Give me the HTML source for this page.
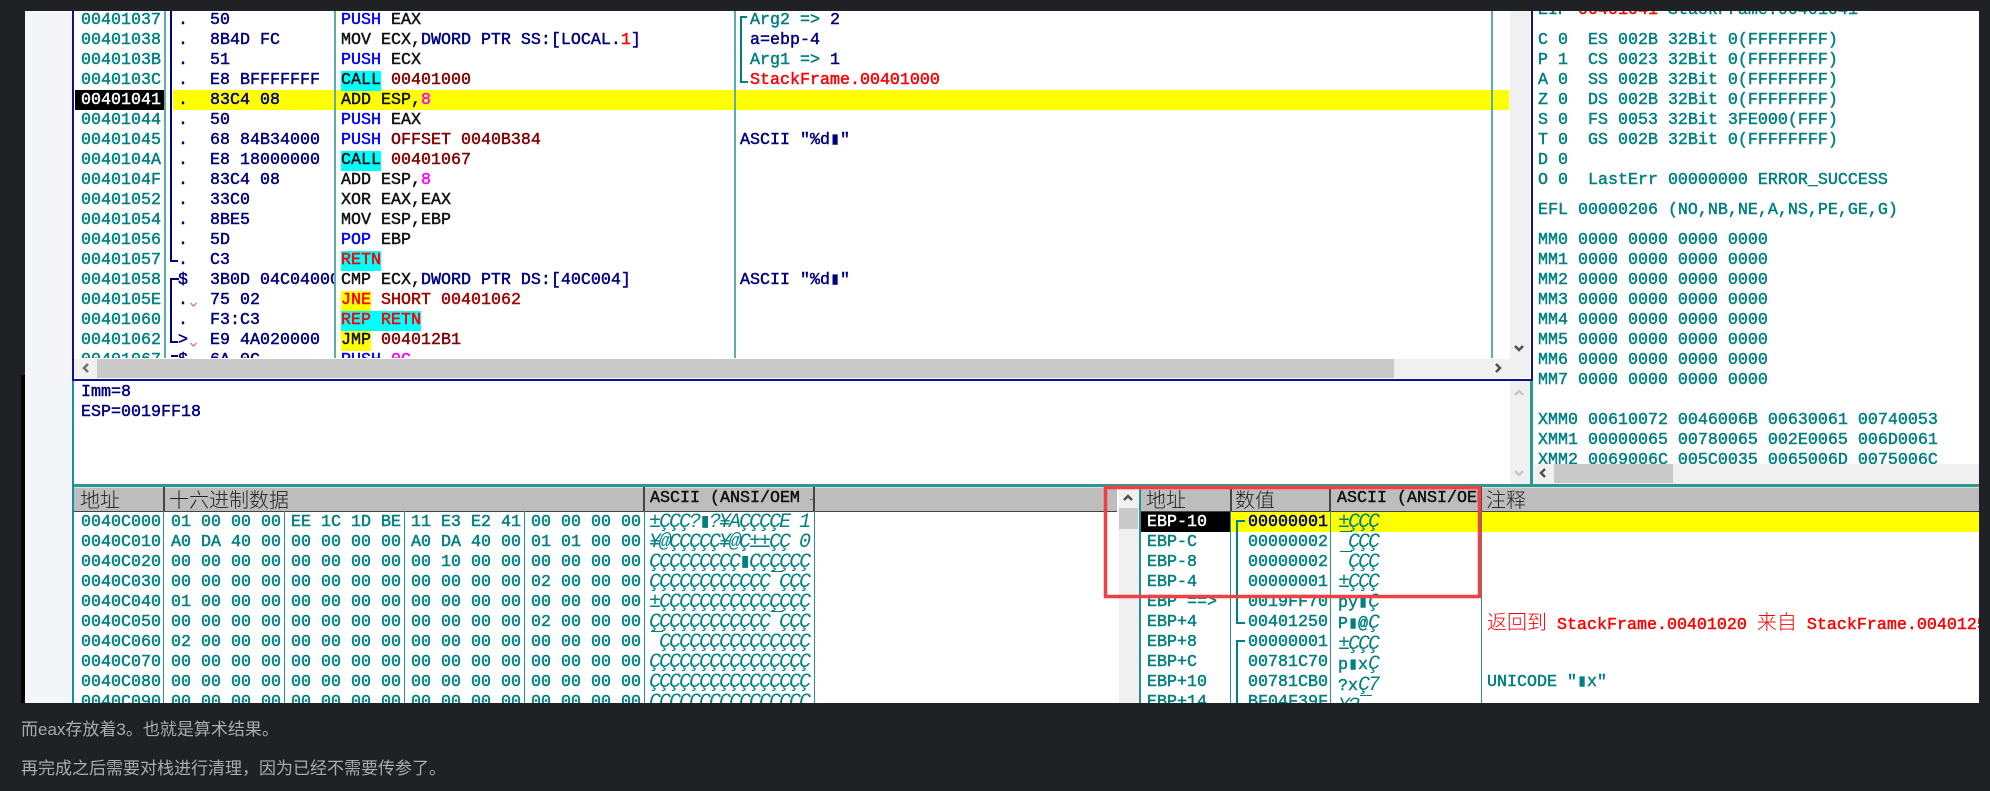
<!DOCTYPE html>
<html lang="zh"><head><meta charset="utf-8"><title>StackFrame</title>
<style>
html,body{margin:0;padding:0;background:#202124;width:1990px;height:791px;overflow:hidden}
#r{position:relative;width:1990px;height:791px;overflow:hidden}
#r div,#r svg{position:absolute}
.t{font:16.667px/20px "Liberation Mono","DejaVu Sans Mono","Noto Sans CJK SC",monospace;white-space:pre;color:#008080;-webkit-text-stroke:.45px currentColor}
.n{color:#000080}.b{color:#0000ff}.k{color:#111}.m{color:#800000}.p{color:#ff00ff}.e{color:#ff0000}.g{color:#008080}
.c{background:#00ffff;display:inline-block;height:20px;vertical-align:top}
.y{background:#ffff00;display:inline-block;height:20px;vertical-align:top}
.a{font-style:italic;font-size:20px;letter-spacing:-2px;-webkit-text-stroke:0}
.a span{font-size:16.667px;letter-spacing:0;font-style:normal;-webkit-text-stroke:.45px currentColor}
.sep{width:2px;background:#5cadad}
.h{top:487px;height:23px;background:#bdbdbd;border-bottom:1px solid #444;border-top:1px solid #ddd;box-sizing:content-box}
.hs{top:487px;width:2px;height:24px;background:#444}
.hc{top:487px;height:24px;font:20px/24px "Noto Sans CJK SC","WenQuanYi Zen Hei",sans-serif;font-weight:300;color:#222;white-space:pre}
.ha{top:489px;font:16.667px/20px "Liberation Mono",monospace;color:#111;white-space:pre;-webkit-text-stroke:.45px #111;overflow:hidden}
.para{left:21px;font:17px/24px "Liberation Sans","Noto Sans CJK SC",sans-serif;color:#a9abb0;white-space:pre}
</style></head><body><div id="r">

<!-- image base -->
<div style="left:25px;top:11px;width:1954px;height:692px;background:#fff"></div>
<div style="left:25px;top:11px;width:47px;height:692px;background:#f4f5f9"></div>
<div style="left:21px;top:375px;width:4px;height:328px;background:#000"></div>

<!-- disasm highlight row -->
<div style="left:75px;top:90px;width:89px;height:20px;background:#000"></div>
<div style="left:173px;top:90px;width:1336px;height:20px;background:#ff0"></div>

<!-- disasm panes -->
<div style="left:74px;top:11px;width:1436px;height:347px;overflow:hidden">
<div class="t" style="left:7px;top:0">00401037
00401038
0040103B
0040103C
<span style="color:#fff">00401041</span>
00401044
00401045
0040104A
0040104F
00401052
00401054
00401056
00401057
00401058
0040105E
00401060
00401062
00401067</div>
<div class="t n" style="left:104px;top:0">.
.
.
.
.
.
.
.
.
.
.
.
.
$
.
.
&gt;
$</div>
<div class="t n" style="left:136px;top:0;width:124px;height:380px;overflow:hidden">50
8B4D FC
51
E8 BFFFFFFF
83C4 08
50
68 84B34000
E8 18000000
83C4 08
33C0
8BE5
5D
C3
3B0D 04C04000
75 02
F3:C3
E9 4A020000
6A 0C</div>
<div class="t k" style="left:267px;top:0"><span class="b">PUSH</span> EAX
MOV ECX,<span class="n">DWORD PTR SS:[LOCAL.</span><span class="e">1</span><span class="n">]</span>
<span class="b">PUSH</span> ECX
<span class="c">CALL</span> <span class="m">00401000</span>
ADD ESP,<span class="p">8</span>
<span class="b">PUSH</span> EAX
<span class="b">PUSH</span> <span class="m">OFFSET 0040B384</span>
<span class="c">CALL</span> <span class="m">00401067</span>
ADD ESP,<span class="p">8</span>
XOR EAX,EAX
MOV ESP,EBP
<span class="b">POP</span> EBP
<span class="c e">RETN</span>
CMP ECX,<span class="n">DWORD PTR DS:[40C004]</span>
<span class="y e">JNE</span> <span class="m" style="color:#a00000">SHORT 00401062</span>
<span class="c e">REP RETN</span>
<span class="y">JMP</span> <span class="m">004012B1</span>
<span class="b">PUSH</span> <span class="p">0C</span></div>
<div class="t n" style="left:666px;top:0"> <span class="g">Arg2 =&gt;</span> 2
 a=ebp-4
 <span class="g">Arg1 =&gt;</span> 1
 <span class="e">StackFrame.00401000</span>


ASCII "%d▮"






ASCII "%d▮"</div>
</div>
<div class="sep" style="left:164px;top:11px;height:347px"></div>
<div class="sep" style="left:334px;top:11px;height:347px"></div>
<div class="sep" style="left:734px;top:11px;height:347px"></div>
<div class="sep" style="left:1491px;top:11px;height:347px"></div>

<svg style="left:0;top:0" width="1990" height="791" fill="none">
<path d="M171 11V261H178M179 279H171V342H178M178 356H171" stroke="#000080" stroke-width="2"/>
<path d="M747 17H741V82H748" stroke="#008080" stroke-width="2"/>
<path d="M190.500 303l3 3 3-3M190.500 343l3 3 3-3" stroke="#f05050" stroke-width="1"/>
</svg>

<!-- top scrollbars -->
<div style="left:1510px;top:11px;width:20px;height:367px;background:#f0f0f0"></div>
<div style="left:74px;top:359px;width:1456px;height:19px;background:#f0f0f0"></div>
<div style="left:97px;top:359px;width:1297px;height:19px;background:#c9c9c9"></div>
<div style="left:72px;top:379px;width:1461px;height:2px;background:#101090"></div>
<div style="left:72px;top:11px;width:2px;height:370px;background:#101090"></div>
<div style="left:1531px;top:11px;width:2px;height:370px;background:#101090"></div>
<div style="left:72px;top:381px;width:2px;height:322px;background:#1a8f9f"></div>
<div style="left:1530px;top:381px;width:3px;height:104px;background:#2a9a90"></div>

<!-- info pane -->
<div class="t n" style="left:81px;top:383px">Imm=8
ESP=0019FF18</div>
<div style="left:1510px;top:381px;width:20px;height:103px;background:#f0f0f0"></div>

<!-- registers -->
<div style="left:1533px;top:11px;width:446px;height:453px;overflow:hidden">
<div class="t" style="left:5px;top:-10px">EIP <span class="e">00401041</span> StackFrame.00401041</div>
<div class="t" style="left:5px;top:20px">C 0  ES 002B 32Bit 0(FFFFFFFF)
P 1  CS 0023 32Bit 0(FFFFFFFF)
A 0  SS 002B 32Bit 0(FFFFFFFF)
Z 0  DS 002B 32Bit 0(FFFFFFFF)
S 0  FS 0053 32Bit 3FE000(FFF)
T 0  GS 002B 32Bit 0(FFFFFFFF)
D 0
O 0  LastErr 00000000 ERROR_SUCCESS</div>
<div class="t" style="left:5px;top:190px">EFL 00000206 (NO,NB,NE,A,NS,PE,GE,G)</div>
<div class="t" style="left:5px;top:220px">MM0 0000 0000 0000 0000
MM1 0000 0000 0000 0000
MM2 0000 0000 0000 0000
MM3 0000 0000 0000 0000
MM4 0000 0000 0000 0000
MM5 0000 0000 0000 0000
MM6 0000 0000 0000 0000
MM7 0000 0000 0000 0000

XMM0 00610072 0046006B 00630061 00740053
XMM1 00000065 00780065 002E0065 006D0061
XMM2 0069006C 005C0035 0065006D 0075006C</div>
</div>
<div style="left:1533px;top:464px;width:446px;height:20px;background:#f0f0f0"></div>
<div style="left:1554px;top:464px;width:119px;height:19px;background:#c9c9c9"></div>

<!-- teal divider + headers -->
<div style="left:74px;top:484px;width:1905px;height:3px;background:#2a9a90"></div>
<div class="h" style="left:74px;width:1043px"></div>
<div class="h" style="left:1141px;width:838px"></div>
<div class="hc" style="left:80px">地址</div>
<div class="hc" style="left:169px">十六进制数据</div>
<div class="ha" style="left:650px;width:160px">ASCII (ANSI/OEM</div>
<div style="left:810px;top:499px;width:3px;height:1px;background:#777"></div>
<div class="hc" style="left:1146px">地址</div>
<div class="hc" style="left:1235px">数值</div>
<div class="ha" style="left:1337px;width:144px">ASCII (ANSI/OEM</div>
<div class="hc" style="left:1486px">注释</div>
<div class="hs" style="left:163px"></div>
<div class="hs" style="left:643px"></div>
<div class="hs" style="left:813px"></div>
<div class="hs" style="left:1230px"></div>
<div class="hs" style="left:1329px"></div>
<div class="hs" style="left:1480px"></div>

<!-- dump -->
<div style="left:74px;top:511px;width:1045px;height:192px;overflow:hidden">
<div class="t" style="left:7px;top:2px">0040C000
0040C010
0040C020
0040C030
0040C040
0040C050
0040C060
0040C070
0040C080
0040C090</div>
<div class="t" style="left:97px;top:2px">01 00 00 00
A0 DA 40 00
00 00 00 00
00 00 00 00
01 00 00 00
00 00 00 00
02 00 00 00
00 00 00 00
00 00 00 00
00 00 00 00</div>
<div class="t" style="left:217px;top:2px">EE 1C 1D BE
00 00 00 00
00 00 00 00
00 00 00 00
00 00 00 00
00 00 00 00
00 00 00 00
00 00 00 00
00 00 00 00
00 00 00 00</div>
<div class="t" style="left:337px;top:2px">11 E3 E2 41
A0 DA 40 00
00 10 00 00
00 00 00 00
00 00 00 00
00 00 00 00
00 00 00 00
00 00 00 00
00 00 00 00
00 00 00 00</div>
<div class="t" style="left:457px;top:2px">00 00 00 00
01 01 00 00
00 00 00 00
02 00 00 00
00 00 00 00
02 00 00 00
00 00 00 00
00 00 00 00
00 00 00 00
00 00 00 00</div>
<div class="t a" style="left:575px;top:2px">±ÇÇÇ?▮?¥AÇÇÇÇE 1
¥@ÇÇÇÇÇ¥@Ç±±ÇÇ 0
ÇÇÇÇÇÇÇÇÇ▮ÇÇÇÇÇÇ
ÇÇÇÇÇÇÇÇÇÇÇÇ¯ÇÇÇ
±ÇÇÇÇÇÇÇÇÇÇÇÇÇÇÇ
ÇÇÇÇÇÇÇÇÇÇÇÇ¯ÇÇÇ
¯ÇÇÇÇÇÇÇÇÇÇÇÇÇÇÇ
ÇÇÇÇÇÇÇÇÇÇÇÇÇÇÇÇ
ÇÇÇÇÇÇÇÇÇÇÇÇÇÇÇÇ
ÇÇÇÇÇÇÇÇÇÇÇÇÇÇÇÇ</div>
</div>
<div class="sep" style="left:163px;top:511px;height:192px;width:1px;background:#2a8f8f"></div>
<div class="sep" style="left:284px;top:511px;height:192px;width:1px;background:#2a8f8f"></div>
<div class="sep" style="left:404px;top:511px;height:192px;width:1px;background:#2a8f8f"></div>
<div class="sep" style="left:524px;top:511px;height:192px;width:1px;background:#2a8f8f"></div>
<div class="sep" style="left:644px;top:511px;height:192px;width:1px;background:#2a8f8f"></div>
<div class="sep" style="left:814px;top:511px;height:192px;width:1px;background:#2a8f8f"></div>

<div style="left:1119px;top:487px;width:20px;height:216px;background:#f0f0f0"></div>
<div style="left:1119px;top:508px;width:19px;height:21px;background:#c9c9c9"></div>
<div style="left:1139px;top:487px;width:2px;height:216px;background:#2a8f8f"></div>

<!-- stack -->
<div style="left:1141px;top:512px;width:89px;height:20px;background:#000"></div>
<div style="left:1231px;top:512px;width:748px;height:20px;background:#ff0"></div>
<div style="left:1141px;top:511px;width:838px;height:192px;overflow:hidden">
<div class="t" style="left:6px;top:2px"><span style="color:#fff">EBP-10</span>
EBP-C
EBP-8
EBP-4
EBP ==&gt;
EBP+4
EBP+8
EBP+C
EBP+10
EBP+14</div>
<div class="t" style="left:107px;top:2px"><span class="n">00000001</span>
00000002
00000002
00000001
0019FF70
00401250
00000001
00781C70
00781CB0
BF04F39F</div>
<div class="t a" style="left:197px;top:2px">±ÇÇÇ
¯ÇÇÇ
¯ÇÇÇ
±ÇÇÇ
<span>py▮</span>Ç
<span>P▮@</span>Ç
±ÇÇÇ
<span>p▮x</span>Ç
<span>?x</span>Ç7
¥?¯</div>
<div class="t e" style="left:346px;top:100px"><span style="font-family:'Noto Sans CJK SC',sans-serif;font-size:20px;font-weight:300;-webkit-text-stroke:0">返回到</span> StackFrame.00401020 <span style="font-family:'Noto Sans CJK SC',sans-serif;font-size:20px;font-weight:300;-webkit-text-stroke:0">来自</span> StackFrame.00401250</div>
<div class="t" style="left:346px;top:162px">UNICODE "▮x"</div>
</div>
<div class="sep" style="left:1230px;top:511px;height:192px;width:1px;background:#2a8f8f"></div>
<div class="sep" style="left:1330px;top:511px;height:192px;width:1px;background:#2a8f8f"></div>
<div class="sep" style="left:1481px;top:511px;height:192px;width:1px;background:#2a8f8f"></div>

<svg style="left:0;top:0" width="1990" height="791" fill="none">
<path d="M1245 521H1237V623H1245M1245 641H1237V703" stroke="#008080" stroke-width="2"/>
<!-- scroll arrows -->
<g stroke-width="2.500">
<path d="M88 364l-4 4 4 4" stroke="#707070"/>
<path d="M1496 364l4 4-4 4" stroke="#505050"/>
<path d="M1515 346l4 4 4-4" stroke="#505050"/>
<path d="M1515 395l4-4 4 4" stroke="#c8c8c8"/>
<path d="M1515 471l4 4 4-4" stroke="#c8c8c8"/>
<path d="M1545 469l-4 4 4 4" stroke="#505050"/>
<path d="M1124 500l4-4 4 4" stroke="#505050"/>
</g>
<rect x="1105.500" y="487.500" width="374" height="109" stroke="#f04044" stroke-width="3.500"/>
</svg>

<!-- article text -->
<div class="para" style="top:718px">而eax存放着3。也就是算术结果。</div>
<div class="para" style="top:757px">再完成之后需要对栈进行清理，因为已经不需要传参了。</div>
</div></body></html>
